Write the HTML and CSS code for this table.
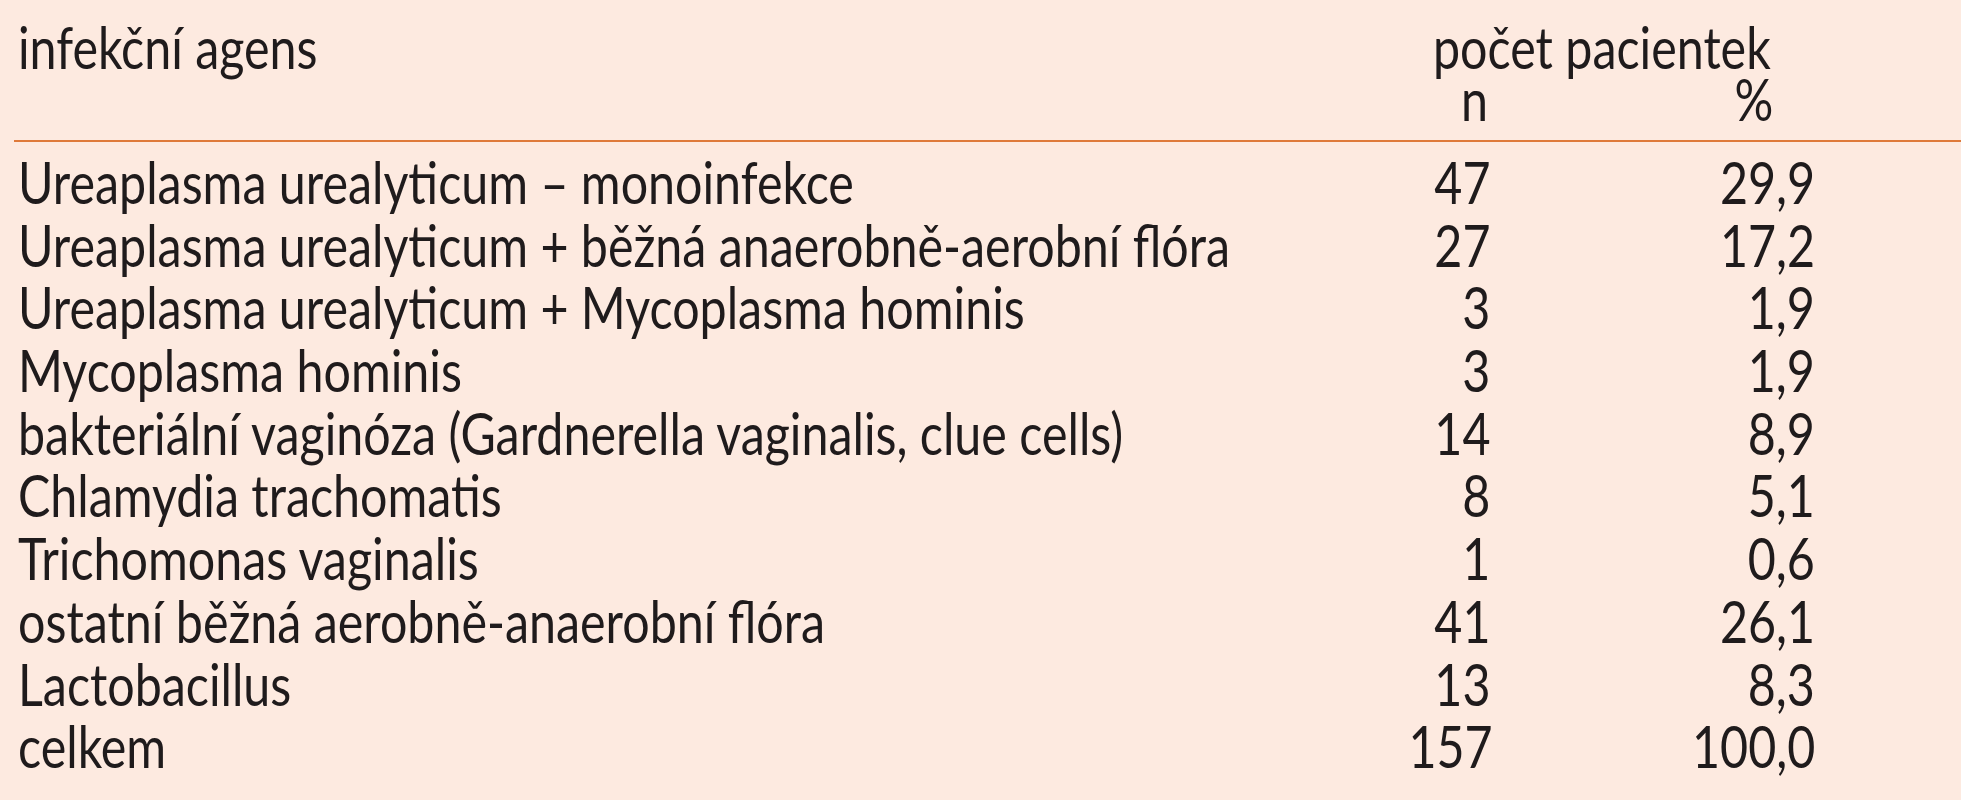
FILE: index.html
```html
<!DOCTYPE html>
<html lang="cs">
<head>
<meta charset="utf-8">
<title>Infekční agens</title>
<link rel="stylesheet" href="styles.css">
</head>
<body>
<div class="table">
  <div class="head">
    <div class="h-label"><span class="t">infekční agens</span></div>
    <div class="h-group"><span class="t">počet pacientek</span></div>
    <div class="h-n"><span class="t r">n</span></div>
    <div class="h-pct"><span class="t r">%</span></div>
  </div>
  <div class="rows">
    <div class="row"><div class="label"><span class="t">Ureaplasma urealyticum – monoinfekce</span></div><div class="n"><span class="t r">47</span></div><div class="pct"><span class="t r">29,9</span></div></div>
    <div class="row"><div class="label"><span class="t">Ureaplasma urealyticum + běžná anaerobně-aerobní flóra</span></div><div class="n"><span class="t r">27</span></div><div class="pct"><span class="t r">17,2</span></div></div>
    <div class="row"><div class="label"><span class="t">Ureaplasma urealyticum + Mycoplasma hominis</span></div><div class="n"><span class="t r">3</span></div><div class="pct"><span class="t r">1,9</span></div></div>
    <div class="row"><div class="label"><span class="t">Mycoplasma hominis</span></div><div class="n"><span class="t r">3</span></div><div class="pct"><span class="t r">1,9</span></div></div>
    <div class="row"><div class="label"><span class="t">bakteriální vaginóza (Gardnerella vaginalis, clue cells)</span></div><div class="n"><span class="t r">14</span></div><div class="pct"><span class="t r">8,9</span></div></div>
    <div class="row"><div class="label"><span class="t">Chlamydia trachomatis</span></div><div class="n"><span class="t r">8</span></div><div class="pct"><span class="t r">5,1</span></div></div>
    <div class="row"><div class="label"><span class="t">Trichomonas vaginalis</span></div><div class="n"><span class="t r">1</span></div><div class="pct"><span class="t r">0,6</span></div></div>
    <div class="row"><div class="label"><span class="t">ostatní běžná aerobně-anaerobní flóra</span></div><div class="n"><span class="t r">41</span></div><div class="pct"><span class="t r">26,1</span></div></div>
    <div class="row"><div class="label"><span class="t">Lactobacillus</span></div><div class="n"><span class="t r">13</span></div><div class="pct"><span class="t r">8,3</span></div></div>
    <div class="row"><div class="label"><span class="t">celkem</span></div><div class="n"><span class="t r">157</span></div><div class="pct"><span class="t r">100,0</span></div></div>
  </div>
</div>
</body>
</html>
```
FILE: styles.css
```css
html, body {
  margin: 0;
  padding: 0;
  background: #fdeae0;
  overflow: hidden;
}
body {
  width: 1961px;
  height: 800px;
  color: #1f1b1c;
  font-family: Lato, "Liberation Sans", sans-serif;
  font-size: 59px;
}
.table {
  padding-left: 14px;
}
/* the printed table is set in a narrow face: each text run is compressed */
.t {
  display: inline-block;
  white-space: nowrap;
  transform: scaleX(0.82);
  transform-origin: left center;
}
.t.r {
  transform-origin: right center;
}
.head {
  display: grid;
  grid-template-columns: 1376px 100px 325px 1fr;
  grid-template-rows: 52px 52px;
  line-height: 52px;
  padding-top: 21px;
  padding-bottom: 15px;
  border-bottom: 2px solid #df7a3a;
}
.h-label {
  grid-row: 1;
  grid-column: 1;
  padding-left: 4px;
}
.h-group {
  grid-row: 1;
  grid-column: 2 / span 2;
  padding-left: 43px;
  white-space: nowrap;
}
.h-n {
  grid-row: 2;
  grid-column: 2;
  text-align: right;
  padding-right: 2px;
}
.h-pct {
  grid-row: 2;
  grid-column: 3;
  text-align: right;
  padding-right: 42px;
}
.rows {
  padding-top: 9px;
}
.row {
  display: grid;
  grid-template-columns: 1376px 100px 325px;
  height: 62.7px;
  line-height: 62.7px;
}
.label {
  padding-left: 4px;
  white-space: nowrap;
}
.n, .pct {
  text-align: right;
  white-space: nowrap;
}
```
